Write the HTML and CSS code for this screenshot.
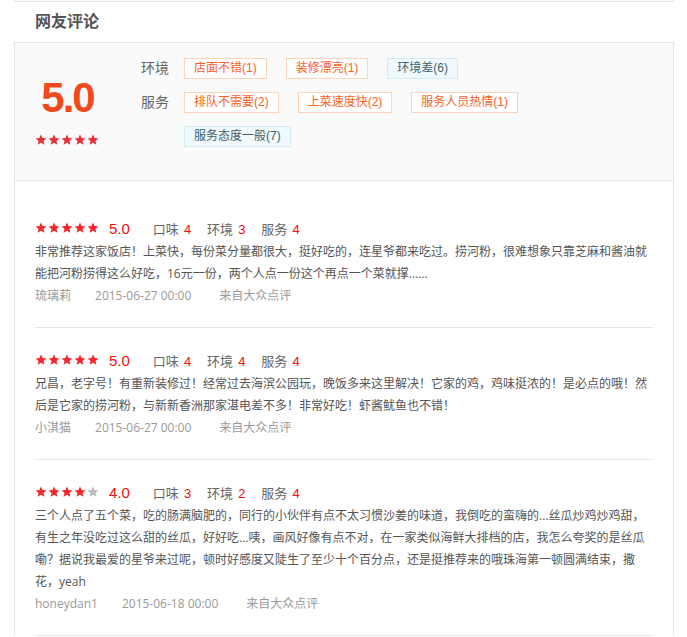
FILE: index.html
```html
<!DOCTYPE html>
<html lang="zh-CN">
<head>
<meta charset="utf-8">
<title>网友评论</title>
<link rel="stylesheet" href="styles.css">
</head>
<body>
<svg width="0" height="0" class="defs">
  <defs>
    <symbol id="star" viewBox="0 0 24 24">
      <polygon points="12,1.2 15.2,8.2 22.8,8.9 17,14 18.8,21.6 12,17.6 5.2,21.6 7,14 1.2,8.9 8.8,8.2"/>
    </symbol>
  </defs>
</svg>
<div class="prev-box"></div>
<h2 class="title">网友评论</h2>

<section class="summary">
  <div class="score">
    <div class="big">5.0</div>
    <div class="stars big-stars">
      <svg class="s on"><use href="#star"/></svg><svg class="s on"><use href="#star"/></svg><svg class="s on"><use href="#star"/></svg><svg class="s on"><use href="#star"/></svg><svg class="s on"><use href="#star"/></svg>
    </div>
  </div>
  <div class="tag-rows">
    <div class="tag-row">
      <span class="tag-label">环境</span>
      <div class="tags">
        <span class="tag good">店面不错(1)</span>
        <span class="tag good">装修漂亮(1)</span>
        <span class="tag bad">环境差(6)</span>
      </div>
    </div>
    <div class="tag-row">
      <span class="tag-label">服务</span>
      <div class="tags">
        <span class="tag good">排队不需要(2)</span>
        <span class="tag good">上菜速度快(2)</span>
        <span class="tag good">服务人员热情(1)</span>
        <span class="tag bad">服务态度一般(7)</span>
      </div>
    </div>
  </div>
</section>

<section class="reviews">
  <article class="review">
    <div class="rate-row">
      <span class="stars">
        <svg class="s on"><use href="#star"/></svg><svg class="s on"><use href="#star"/></svg><svg class="s on"><use href="#star"/></svg><svg class="s on"><use href="#star"/></svg><svg class="s on"><use href="#star"/></svg>
      </span>
      <span class="rate">5.0</span>
      <span class="dim">口味<em>4</em></span>
      <span class="dim">环境<em>3</em></span>
      <span class="dim">服务<em>4</em></span>
    </div>
    <p class="body">非常推荐这家饭店！上菜快，每份菜分量都很大，挺好吃的，连星爷都来吃过。捞河粉，很难想象只靠芝麻和酱油就能把河粉捞得这么好吃，16元一份，两个人点一份这个再点一个菜就撑......</p>
    <div class="meta"><span class="user">琉璃莉</span><span class="date">2015-06-27 00:00</span><span class="src">来自大众点评</span></div>
  </article>

  <article class="review">
    <div class="rate-row">
      <span class="stars">
        <svg class="s on"><use href="#star"/></svg><svg class="s on"><use href="#star"/></svg><svg class="s on"><use href="#star"/></svg><svg class="s on"><use href="#star"/></svg><svg class="s on"><use href="#star"/></svg>
      </span>
      <span class="rate">5.0</span>
      <span class="dim">口味<em>4</em></span>
      <span class="dim">环境<em>4</em></span>
      <span class="dim">服务<em>4</em></span>
    </div>
    <p class="body">兄昌，老字号！有重新装修过！经常过去海滨公园玩，晚饭多来这里解决！它家的鸡，鸡味挺浓的！是必点的哦！然后是它家的捞河粉，与新新香洲那家湛电差不多！非常好吃！虾酱鱿鱼也不错！</p>
    <div class="meta"><span class="user">小淇猫</span><span class="date">2015-06-27 00:00</span><span class="src">来自大众点评</span></div>
  </article>

  <article class="review">
    <div class="rate-row">
      <span class="stars">
        <svg class="s on"><use href="#star"/></svg><svg class="s on"><use href="#star"/></svg><svg class="s on"><use href="#star"/></svg><svg class="s on"><use href="#star"/></svg><svg class="s off"><use href="#star"/></svg>
      </span>
      <span class="rate">4.0</span>
      <span class="dim">口味<em>3</em></span>
      <span class="dim">环境<em>2</em></span>
      <span class="dim">服务<em>4</em></span>
    </div>
    <p class="body">三个人点了五个菜，吃的肠满脑肥的，同行的小伙伴有点不太习惯沙姜的味道，我倒吃的蛮嗨的...丝瓜炒鸡炒鸡甜，有生之年没吃过这么甜的丝瓜，好好吃...咦，画风好像有点不对，在一家类似海鲜大排档的店，我怎么夸奖的是丝瓜嘞？据说我最爱的星爷来过呢，顿时好感度又陡生了至少十个百分点，还是挺推荐来的哦珠海第一顿圆满结束，撒花，yeah</p>
    <div class="meta"><span class="user">honeydan1</span><span class="date">2015-06-18 00:00</span><span class="src">来自大众点评</span></div>
  </article>
</section>
</body>
</html>
```

FILE: styles.css
```css
* { box-sizing: border-box; }

html, body {
  margin: 0;
  padding: 0;
  background: #fff;
}

body {
  font-family: "Liberation Sans", "Noto Sans CJK SC", sans-serif;
  font-size: 12px;
  color: #555;
}

.defs {
  position: absolute;
  width: 0;
  height: 0;
  overflow: hidden;
}

.prev-box {
  margin-left: 14px;
  width: 660px;
  height: 2px;
  border: 1px solid #e5e5e5;
  border-top: none;
}

.title {
  margin: 0 0 0 14px;
  padding: 9px 21px;
  font-size: 16px;
  line-height: 22px;
  font-weight: bold;
  color: #555;
}

.summary {
  margin-left: 14px;
  width: 660px;
  height: 139px;
  border: 1px solid #e5e5e5;
  background: #fafafa;
  display: flex;
}

.score {
  width: 103px;
  padding-top: 34px;
  display: flex;
  flex-direction: column;
  align-items: center;
}

.big {
  font-size: 42px;
  line-height: 42px;
  font-weight: bold;
  color: #f04a1c;
  letter-spacing: -2px;
  padding-left: 2px;
}

.big-stars {
  margin-top: 15px;
}

.stars {
  display: inline-flex;
  gap: 1px;
}

.s {
  width: 12px;
  height: 12px;
  display: block;
}

.s.on { fill: #f3292d; }
.s.off { fill: #bcbcbc; }

.big-stars .s.on { fill: #e8323a; }

.tag-rows {
  margin-left: 23px;
  padding-top: 15px;
  display: flex;
  flex-direction: column;
  gap: 13px;
}

.tag-row {
  display: flex;
  align-items: flex-start;
}

.tag-label {
  width: 43px;
  flex: none;
  font-size: 14px;
  line-height: 21px;
  color: #666;
}

.tags {
  width: 440px;
  display: flex;
  flex-wrap: wrap;
  column-gap: 19px;
  row-gap: 13px;
}

.tag {
  display: inline-block;
  height: 21px;
  padding: 0 9px;
  font-size: 12px;
  line-height: 19px;
  border: 1px solid #fbd5ba;
  background: #fff;
  color: #f7621f;
  white-space: nowrap;
}

.tag.bad {
  border-color: #d3ebf2;
  background: #f0f9fc;
  color: #3f5f6a;
}

.reviews {
  margin-left: 14px;
  width: 660px;
  border-left: 1px solid #e5e5e5;
  border-right: 1px solid #e5e5e5;
  padding: 15px 20px 0;
}

.review {
  padding: 22px 0 20px;
  border-bottom: 1px solid #e5e5e5;
}

.rate-row {
  display: flex;
  align-items: center;
  height: 20px;
}

.rate {
  margin-left: 10px;
  margin-right: 23px;
  font-size: 15px;
  color: #f30d0d;
}

.dim {
  font-size: 13px;
  color: #666;
  margin-right: 16px;
}

.dim em {
  font-style: normal;
  color: #f30d0d;
  margin-left: 5px;
}

.body {
  margin: 3px 0 0;
  font-family: "Open Sans", "Noto Sans CJK SC", sans-serif;
  font-size: 12px;
  line-height: 22px;
  color: #555;
}

.meta {
  font-family: "Open Sans", "Noto Sans CJK SC", sans-serif;
  font-size: 12px;
  line-height: 22px;
  color: #999;
}

.user {
  margin-right: 24px;
}

.date {
  margin-right: 28px;
}
```
